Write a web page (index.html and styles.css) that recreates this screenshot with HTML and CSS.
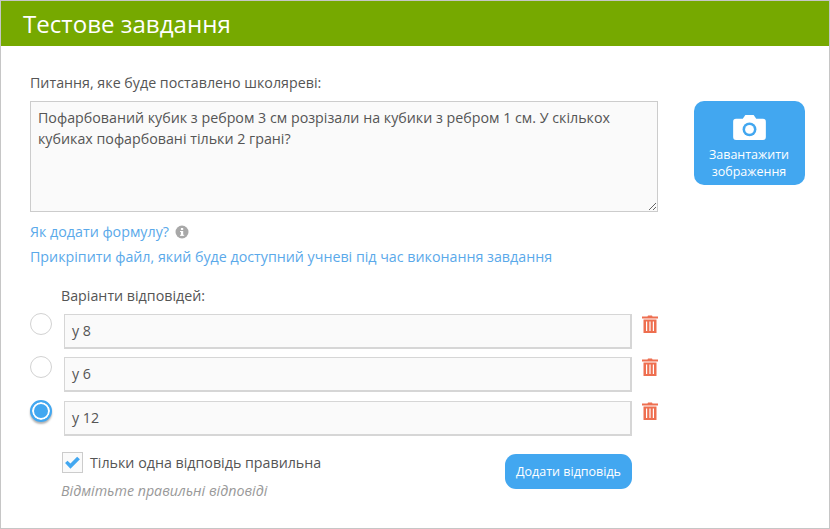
FILE: index.html
```html
<!DOCTYPE html>
<html lang="uk">
<head>
<meta charset="utf-8">
<title>Тестове завдання</title>
<link rel="stylesheet" href="styles.css">
</head>
<body>
<div class="panel">
  <header class="head"><h1 class="title">Тестове завдання</h1></header>
  <main class="content">
    <div class="question">
      <div class="question-main">
        <div class="label">Питання, яке буде поставлено школяреві:</div>
        <div class="textarea">Пофарбований кубик з ребром 3 см розрізали на кубики з ребром 1 см. У скількох кубиках пофарбовані тільки 2 грані?</div>
        <div class="link-row first">
          <a class="link">Як додати формулу?</a>
          <svg class="info" viewBox="0 0 14 14" width="14" height="14"><circle cx="7" cy="7" r="6.5" fill="#a8a8a8"/><rect x="5.9" y="6" width="2.3" height="4.6" fill="#fff"/><rect x="5.9" y="3" width="2.3" height="2" fill="#fff"/><rect x="5" y="6" width="2" height="1" fill="#fff"/><rect x="5" y="9.8" width="4.2" height="1" fill="#fff"/></svg>
        </div>
        <div class="link-row"><a class="link">Прикріпити файл, який буде доступний учневі під час виконання завдання</a></div>
      </div>
      <button class="upload">
        <svg class="camera" viewBox="0 0 34 26" width="33" height="25"><path fill="#fff" d="M3 4h7l2-3a1.5 1.5 0 0 1 1-1h8a1.5 1.5 0 0 1 1 1l2 3h7a3 3 0 0 1 3 3v16a3 3 0 0 1-3 3H3a3 3 0 0 1-3-3V7a3 3 0 0 1 3-3z"/><circle cx="17" cy="15" r="7.2" fill="#42a7f0"/><circle cx="17" cy="15" r="4.6" fill="#fff"/></svg>
        <span>Завантажити зображення</span>
      </button>
    </div>
    <div class="answers">
      <div class="answers-title">Варіанти відповідей:</div>
      <div class="answer">
        <span class="radio"></span>
        <div class="input">у 8</div>
        <svg class="trash" viewBox="0 0 16 18" width="16" height="18"><path fill="#ee6f50" d="M5.5 1.5 6 .5h4l.5 1H16v2H0v-2z"/><path fill="#ee6f50" d="M1.5 4.5h13V18h-13zM4 6.5V16h1.2V6.5zm3.4 0V16h1.2V6.5zm3.4 0V16H12V6.5z"/></svg>
      </div>
      <div class="answer">
        <span class="radio"></span>
        <div class="input">у 6</div>
        <svg class="trash" viewBox="0 0 16 18" width="16" height="18"><path fill="#ee6f50" d="M5.5 1.5 6 .5h4l.5 1H16v2H0v-2z"/><path fill="#ee6f50" d="M1.5 4.5h13V18h-13zM4 6.5V16h1.2V6.5zm3.4 0V16h1.2V6.5zm3.4 0V16H12V6.5z"/></svg>
      </div>
      <div class="answer">
        <span class="radio checked"></span>
        <div class="input">у 12</div>
        <svg class="trash" viewBox="0 0 16 18" width="16" height="18"><path fill="#ee6f50" d="M5.5 1.5 6 .5h4l.5 1H16v2H0v-2z"/><path fill="#ee6f50" d="M1.5 4.5h13V18h-13zM4 6.5V16h1.2V6.5zm3.4 0V16h1.2V6.5zm3.4 0V16H12V6.5z"/></svg>
      </div>
      <div class="options">
        <div class="options-left">
          <div class="check-row">
            <span class="checkbox"><svg viewBox="0 0 16 14" width="15" height="13"><path fill="#42a7f0" d="M0 7.5 2.6 5l3.2 3.2L13 0.8 16 3.4 5.8 13.6z"/></svg></span>
            <span class="check-label">Тільки одна відповідь правильна</span>
          </div>
          <div class="hint">Відмітьте правильні відповіді</div>
        </div>
        <button class="add">Додати відповідь</button>
      </div>
    </div>
  </main>
</div>
</body>
</html>
```
FILE: styles.css
```css
* { box-sizing: border-box; }
html, body { margin: 0; padding: 0; }
body {
  width: 830px;
  height: 529px;
  overflow: hidden;
  background: #fff;
  font-family: "Open Sans", "Liberation Sans", sans-serif;
  font-size: 14.25px;
  color: #555;
}
.panel {
  width: 830px;
  height: 529px;
  border: 1px solid #c6c6c6;
  background: #fff;
}
.head {
  height: 45px;
  margin: 0;
  padding-left: 22px;
  background: #76a900;
  display: flex;
  align-items: center;
}
.title {
  margin: 0;
  font-size: 24.1px;
  font-weight: 400;
  color: #fff;
  line-height: 46px;
}
.content { padding: 26px 24px 0 29px; }
.question { display: flex; gap: 36px; align-items: flex-start; }
.question-main { width: 628px; }
.label { line-height: 22px; margin-bottom: 7px; }
.textarea {
  width: 628px;
  height: 111px;
  padding: 5px 7px;
  border: 1px solid #ccc;
  background: #fafafa;
  line-height: 21px;
  resize: both;
  overflow: auto;
}
.link-row { display: flex; align-items: center; gap: 6px; height: 25px; line-height: 25px; }
.link-row.first { margin-top: 7px; }
.link { color: #5aa9ea; }
.info { display: block; margin-top: 1px; }
.upload {
  width: 111px;
  height: 84px;
  margin-top: 29px;
  padding: 14px 4px 0 3px;
  border: 0;
  border-radius: 10px;
  background: #42a7f0;
  color: #fff;
  font: 400 12.5px/17px "Open Sans", "Liberation Sans", sans-serif;
  display: flex;
  flex-direction: column;
  align-items: center;
}
.camera { display: block; margin-bottom: 6px; }
.answers { margin-top: 16px; }
.answers-title { margin-left: 31px; line-height: 22px; margin-bottom: 7px; }
.answer { display: flex; align-items: flex-start; height: 43.4px; }
.radio {
  width: 22px;
  height: 22px;
  margin-top: -1px;
  border: 1px solid #d2d2d2;
  border-radius: 50%;
  background: #fff;
  flex: none;
}
.radio.checked {
  border: 2px solid #42a7f0;
  background: #42a7f0;
  box-shadow: inset 0 0 0 2px #fff, 0 2px 2px rgba(0, 0, 0, 0.3);
}
.input {
  width: 568px;
  height: 35px;
  margin-left: 12px;
  padding-left: 7px;
  border: 1px solid #d6d6d6;
  border-width: 1px 2px 2px 1px;
  background: #fafafa;
  line-height: 31px;
  color: #555;
  flex: none;
}
.trash { display: block; margin: 1px 0 0 10px; flex: none; }
.options { display: flex; justify-content: flex-start; align-items: flex-start; margin-top: 7.8px; }
.options-left { width: 475px; margin-left: 32px; }
.check-row { display: flex; align-items: center; height: 22px; }
.checkbox {
  width: 21px;
  height: 21px;
  border: 1px solid #ccc;
  background: #fafafa;
  display: flex;
  align-items: center;
  justify-content: center;
  flex: none;
}
.check-label { margin-left: 7px; }
.hint { margin-top: 6px; margin-left: -1px; font-style: italic; color: #999; line-height: 22px; }
.add {
  width: 127px;
  height: 35px;
  margin: 2px 0 0 -32px;
  border: 0;
  border-radius: 11px;
  background: #42a7f0;
  color: #fff;
  font: 400 12.5px "Open Sans", "Liberation Sans", sans-serif;
  padding: 0;
}
```
